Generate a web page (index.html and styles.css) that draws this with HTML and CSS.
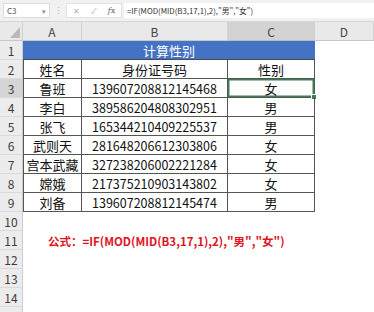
FILE: index.html
```html
<!DOCTYPE html>
<html lang="zh">
<head>
<meta charset="utf-8">
<link rel="stylesheet" href="styles.css">
</head>
<body>
<div class="app">
  <div class="toolbar">
    <div class="namebox"><span>C3</span><span class="caret">▾</span></div>
    <div class="sep">⋮</div>
    <div class="fxbox"><span class="ic">✕</span><span class="ic">✓</span><span class="ic fx"><i>f</i>x</span></div>
    <div class="formula">=IF(MOD(MID(B3,17,1),2),"男","女")</div>
  </div>
  <div class="sheet">
    <div class="corner"><svg width="10" height="11" viewBox="0 0 10 11"><polygon points="10,0 10,11 0,11" fill="#b9b9b9"/></svg></div>
    <div class="ch">A</div>
    <div class="ch">B</div>
    <div class="ch sel">C</div>
    <div class="ch">D</div>

    <div class="rh">1</div>
    <div class="title">计算性别</div>
    <div class="e"></div>

    <div class="rh">2</div>
    <div class="c a">姓名</div><div class="c">身份证号码</div><div class="c">性别</div><div class="e"></div>

    <div class="rh sel">3</div>
    <div class="c a">鲁班</div><div class="c num">139607208812145468</div><div class="c active">女<span class="handle"></span></div><div class="e"></div>

    <div class="rh">4</div>
    <div class="c a">李白</div><div class="c num">389586204808302951</div><div class="c">男</div><div class="e"></div>

    <div class="rh">5</div>
    <div class="c a">张飞</div><div class="c num">165344210409225537</div><div class="c">男</div><div class="e"></div>

    <div class="rh">6</div>
    <div class="c a">武则天</div><div class="c num">281648206612303806</div><div class="c">女</div><div class="e"></div>

    <div class="rh">7</div>
    <div class="c a">宫本武藏</div><div class="c num">327238206002221284</div><div class="c">女</div><div class="e"></div>

    <div class="rh">8</div>
    <div class="c a">嫦娥</div><div class="c num">217375210903143802</div><div class="c">女</div><div class="e"></div>

    <div class="rh">9</div>
    <div class="c a">刘备</div><div class="c num">139607208812145474</div><div class="c">男</div><div class="e"></div>

    <div class="rh">10</div>
    <div class="blank"></div>

    <div class="rh">11</div>
    <div class="blank note">公式：=IF(MOD(MID(B3,17,1),2),"男","女")</div>

    <div class="rh">12</div>
    <div class="blank"></div>

    <div class="rh">13</div>
    <div class="blank"></div>

    <div class="rh">14</div>
    <div class="blank"></div>

    <div class="rh"></div>
    <div class="blank"></div>
  </div>
</div>
</body>
</html>
```
FILE: styles.css
```css
html, body {
  margin: 0;
  padding: 0;
  background: #ffffff;
}
body {
  font-family: "Noto Sans CJK SC", "Noto Sans", sans-serif;
  color: #1a1a1a;
  overflow: hidden;
}
.app {
  width: 374px;
  height: 312px;
  overflow: hidden;
}
.toolbar {
  height: 22px;
  box-sizing: border-box;
  background: #f1f1f1;
  border-bottom: 1px solid #d6d6d6;
  display: flex;
  align-items: center;
  padding: 3px 0 3px 3px;
}
.namebox {
  width: 47px;
  height: 15px;
  background: #ffffff;
  border: 1px solid #dcdcdc;
  box-sizing: border-box;
  display: flex;
  align-items: center;
  justify-content: space-between;
  padding: 0 3px;
  font-size: 8px;
  color: #555;
}
.caret {
  font-size: 7px;
  color: #888;
}
.sep {
  width: 16px;
  text-align: center;
  font-size: 9px;
  color: #b5b5b5;
}
.fxbox {
  width: 56px;
  height: 15px;
  background: #ffffff;
  border: 1px solid #e2e2e2;
  box-sizing: border-box;
  display: flex;
  align-items: center;
  justify-content: space-around;
  font-size: 8px;
  color: #b0b0b0;
}
.fx {
  color: #666;
  font-family: "DejaVu Serif", serif;
  font-size: 8px;
}
.formula {
  flex: 1;
  height: 15px;
  margin-left: 2px;
  background: #ffffff;
  box-sizing: border-box;
  padding-left: 3px;
  font-size: 7.8px;
  line-height: 15px;
  color: #333;
  white-space: nowrap;
  overflow: hidden;
}
.sheet {
  display: grid;
  grid-template-columns: 23px 59px 146px 87px 59px;
  grid-auto-rows: 19px;
}
.corner {
  background: #e9e9e9;
  border-right: 1px solid #cfcfcf;
  border-bottom: 1px solid #c8c8c8;
  box-sizing: border-box;
  display: flex;
  align-items: flex-end;
  justify-content: flex-end;
  padding: 0 2px 2px 0;
}
.ch {
  background: #e9e9e9;
  border-right: 1px solid #d0d0d0;
  border-bottom: 1px solid #c8c8c8;
  box-sizing: border-box;
  font-size: 12px;
  color: #444;
  display: flex;
  align-items: center;
  justify-content: center;
}
.ch.sel {
  background: #d3d3d3;
  border-bottom: 1px solid #bbbbbb;
}
.rh {
  background: #ececec;
  border-right: 1px solid #cdcdcd;
  border-bottom: 1px solid #dadada;
  box-sizing: border-box;
  font-size: 12px;
  color: #3d3d3d;
  display: flex;
  align-items: center;
  justify-content: center;
}
.rh.sel {
  background: #d5d5d5;
}
.title {
  grid-column: span 3;
  background: #4472c4;
  color: #ffffff;
  font-size: 13px;
  display: flex;
  align-items: center;
  justify-content: center;
  border-bottom: 1px solid #4a4a4a;
  box-sizing: border-box;
}
.c {
  position: relative;
  border-right: 1px solid #555555;
  border-bottom: 1px solid #555555;
  box-sizing: border-box;
  font-size: 13px;
  color: #111;
  display: flex;
  align-items: center;
  justify-content: center;
  white-space: nowrap;
}
.c.a {
  border-left: 1px solid #555555;
}
.c.num {
  font-size: 12.5px;
}
.c.active {
  box-shadow: inset 0 0 0 1.5px #3f7d55;
}
.handle {
  position: absolute;
  right: -3px;
  bottom: -3px;
  width: 4px;
  height: 4px;
  background: #3f7d55;
  border: 1px solid #ffffff;
}
.e {
  background: #ffffff;
}
.blank {
  grid-column: span 4;
  background: #ffffff;
}
.note {
  color: #e0141e;
  font-weight: bold;
  font-size: 11.5px;
  display: flex;
  align-items: center;
  padding-left: 25px;
  white-space: nowrap;
}
```
